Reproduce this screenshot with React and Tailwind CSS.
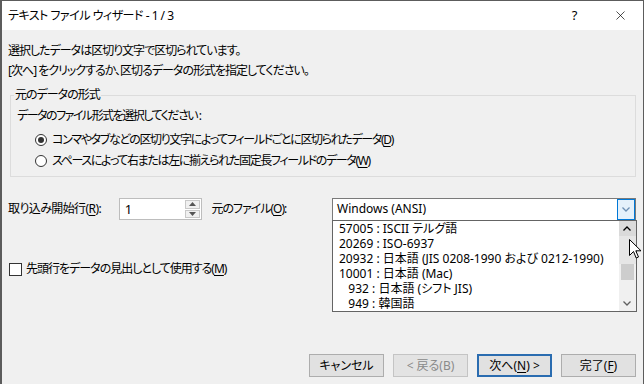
import { X } from 'lucide-react'

// Excel テキスト ファイル ウィザード 1/3 — Win10 風のダイアログ
const font = "font-['Noto_Sans','Noto_Sans_CJK_JP',sans-serif] [font-feature-settings:'palt']"

const encodings = [
  '57005 : ISCII テルグ語',
  '20269 : ISO-6937',
  '20932 : 日本語 (JIS 0208-1990 および 0212-1990)',
  '10001 : 日本語 (Mac)',
  '\u00a0\u00a0\u00a0932 : 日本語 (シフト JIS)',
  '\u00a0\u00a0\u00a0949 : 韓国語',
]

function Radio({ checked, children }) {
  return (
    <div className="flex h-[16px] items-center gap-[5px] pl-[21px]">
      <span className="flex h-[12px] w-[12px] items-center justify-center rounded-full border border-[#333] bg-white">
        {checked && <span className="h-[6px] w-[6px] rounded-full bg-[#333]" />}
      </span>
      <span className="leading-[16px] tracking-[-1.35px]">{children}</span>
    </div>
  )
}

function Button({ children, variant }) {
  const styles = {
    normal: 'border border-[#adadad] bg-[#e1e1e1] text-black',
    disabled: 'border border-[#c4c4c4] bg-[#e3e3e3] text-[#8a8a8a]',
    primary: 'border-2 border-[#2a6cb0] bg-[#e1e1e1] text-black',
  }[variant || 'normal']
  return (
    <div className={`flex h-[23px] w-[75px] items-center justify-center whitespace-pre leading-none tracking-normal ${styles}`}>
      {children}
    </div>
  )
}

function Chevron({ up, className }) {
  return (
    <svg width="8" height="5" viewBox="0 0 8 5" className={className}>
      <path d={up ? 'M0.5 4.5 L4 1 L7.5 4.5' : 'M0.5 0.5 L4 4 L7.5 0.5'} fill="none" stroke="currentColor" strokeWidth="1.3" />
    </svg>
  )
}

export default function App() {
  return (
    <div className={`relative flex h-[384px] w-[644px] flex-col overflow-hidden border-l-2 border-r border-t border-[#5c5c5c] bg-[#f0f0f0] text-[12px] tracking-[-1px] text-black ${font}`}>
      {/* タイトルバー */}
      <div className="flex h-[29px] shrink-0 items-center bg-white pl-[6px]">
        <span className="leading-none tracking-[-0.5px]">テキスト ファイル ウィザード - 1 / 3</span>
        <div className="ml-auto flex h-full">
          <div className="flex w-[46px] items-center justify-center text-[13px]">?</div>
          <div className="flex w-[46px] items-center justify-center">
            <X size={15} strokeWidth={1.1} />
          </div>
        </div>
      </div>

      <div className="flex flex-1 flex-col pb-[7px] pl-[6px] pr-[7px]">
        <p className="mt-[13px] leading-[16px]">選択したデータは区切り文字で区切られています。</p>
        <p className="mt-[4px] leading-[16px]">[次へ] をクリックするか、区切るデータの形式を指定してください。</p>

        <fieldset className="ml-[2px] mt-[8px] w-[626px] border border-[#dcdcdc] pb-[7px] pl-[3px]">
          <legend className="px-[1px] leading-[16px]">元のデータの形式</legend>
          <p className="ml-[3px] mt-[5px] leading-[16px] tracking-[-1.5px]">データのファイル形式を選択してください :</p>
          <div className="mt-[8px]">
            <Radio checked>
              コンマやタブなどの区切り文字によってフィールドごとに区切られたデータ(<u className="underline-offset-2">D</u>)
            </Radio>
          </div>
          <div className="mt-[5px]">
            <Radio>
              スペースによって右または左に揃えられた固定長フィールドのデータ(<u className="underline-offset-2">W</u>)
            </Radio>
          </div>
        </fieldset>

        <div className="mt-[21px] flex h-[22px] items-center">
          <span className="w-[111px] leading-none tracking-[-0.6px]">
            取り込み開始行(<u className="underline-offset-2">R</u>):
          </span>
          <div className="flex h-[22px] w-[84px] items-center border border-[#bdbdbd] bg-white">
            <span className="flex-1 pl-[5px] text-[13px] leading-none">1</span>
            <div className="mr-[1px] flex h-[18px] w-[15px] flex-col gap-[1px]">
              <div className="flex flex-1 items-center justify-center border border-[#c8c8c8] bg-[#f0f0f0]">
                <svg width="7" height="4" viewBox="0 0 7 4"><path d="M0 4 L3.5 0 L7 4 Z" fill="#555" /></svg>
              </div>
              <div className="flex flex-1 items-center justify-center border border-[#c8c8c8] bg-[#f0f0f0]">
                <svg width="7" height="4" viewBox="0 0 7 4"><path d="M0 0 L3.5 4 L7 0 Z" fill="#555" /></svg>
              </div>
            </div>
          </div>
          <span className="ml-[9px] w-[121px] leading-none">
            元のファイル(<u className="underline-offset-2">O</u>):
          </span>

          <div className="relative flex h-[23px] w-[305px] items-center border border-[#7a7a7a] bg-white tracking-normal">
            <span className="flex-1 pl-[4px] leading-none">Windows (ANSI)</span>
            <div className="flex h-full w-[18px] items-center justify-center border border-[#0078d7] bg-[#e5f1fb] text-[#6d8fb3]">
              <Chevron />
            </div>

            {/* 開いたドロップダウン */}
            <div className="absolute left-[-1px] top-[21px] z-10 flex h-[92px] w-[305px] border border-[#646464] bg-white">
              <div className="flex-1 overflow-hidden pl-[6px]">
                {encodings.map((e) => (
                  <div key={e} className="h-[15px] whitespace-pre leading-[15px]">{e}</div>
                ))}
              </div>
              <div className="flex w-[17px] flex-col bg-[#f0f0f0]">
                <div className="flex h-[15px] items-center justify-center bg-[#dadada] text-[#000]">
                  <Chevron up />
                </div>
                <div className="h-[28px] bg-[#e6e6e6]" />
                <div className="mx-[2px] h-[16px] bg-[#cdcdcd]" />
                <div className="flex-1" />
                <div className="flex h-[15px] items-center justify-center text-[#606060]">
                  <Chevron />
                </div>
              </div>
            </div>
          </div>
        </div>

        <div className="mt-[41px] flex h-[16px] items-center gap-[4px] pl-[1px]">
          <span className="h-[13px] w-[13px] border border-[#333] bg-white" />
          <span className="leading-[16px]">
            先頭行をデータの見出しとして使用する(<u className="underline-offset-2">M</u>)
          </span>
        </div>

        <div className="mt-auto flex justify-end gap-[9px]">
          <Button>キャンセル</Button>
          <Button variant="disabled">{'< 戻る(B)'}</Button>
          <Button variant="primary">
            次へ(<u className="underline-offset-2">N</u>){' >'}
          </Button>
          <Button>
            完了(<u className="underline-offset-2">F</u>)
          </Button>
        </div>
      </div>

      {/* マウスカーソル */}
      <svg className="absolute left-[627px] top-[238px] z-20" width="13" height="21" viewBox="0 0 13 21">
        <path d="M0.5 0.5 L0.5 16.5 L4.5 12.5 L7.2 19 L9.5 18 L6.8 11.8 L12 11.8 Z" fill="white" stroke="black" strokeWidth="1" strokeLinejoin="round" />
      </svg>
    </div>
  )
}
